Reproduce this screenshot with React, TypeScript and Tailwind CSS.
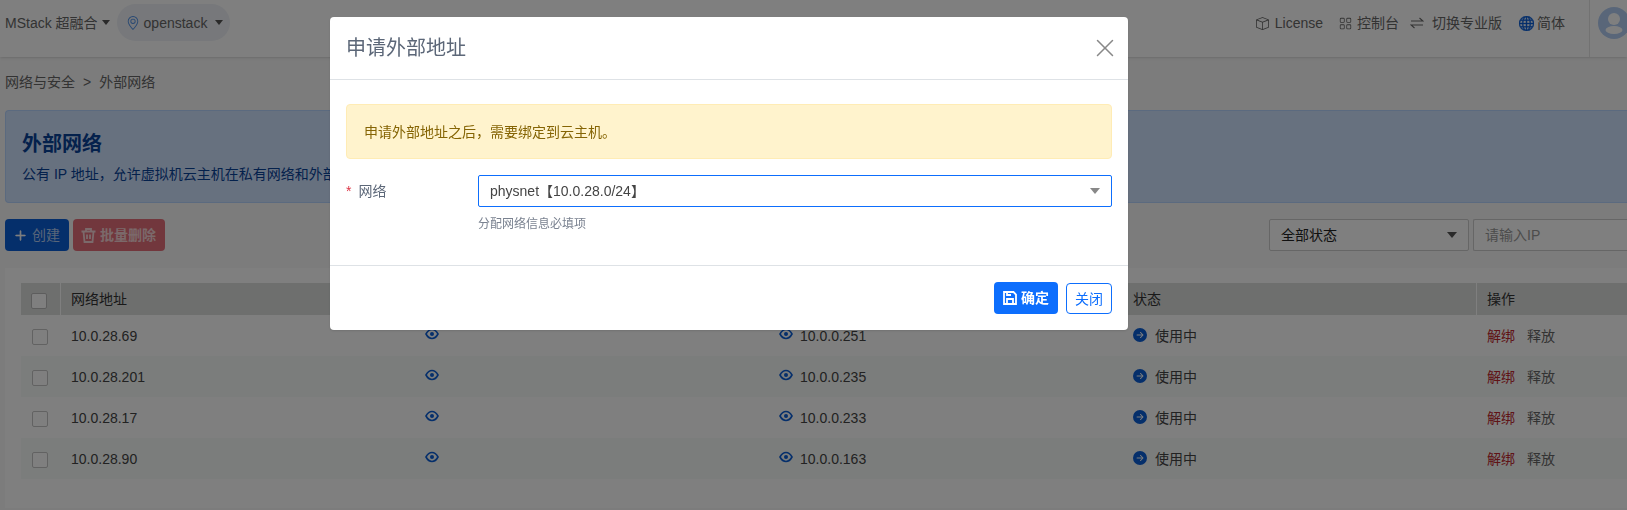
import { BsBox, BsGeoAlt, BsPlusLg, BsArrowRightCircleFill, BsGlobe, BsGrid } from "react-icons/bs";
import { X } from "lucide-react";

const rows = [
  { ip: "10.0.28.69", inner: "10.0.0.251" },
  { ip: "10.0.28.201", inner: "10.0.0.235" },
  { ip: "10.0.28.17", inner: "10.0.0.233" },
  { ip: "10.0.28.90", inner: "10.0.0.163" },
];

function Caret({ className = "ml-1" }: { className?: string }) {
  return <span className={`inline-block border-x-[4px] border-t-[5px] border-x-transparent border-t-[#555] ${className}`} />;
}

function Eye({ className = "" }: { className?: string }) {
  return (
    <svg width="14" height="12" viewBox="0 0 14 12" className={`text-[#0b5ed7] ${className}`} fill="none">
      <path d="M1 6C2.6 3 4.6 1.5 7 1.5S11.4 3 13 6C11.4 9 9.4 10.5 7 10.5S2.6 9 1 6Z" stroke="currentColor" strokeWidth="1.6" />
      <circle cx="7" cy="6" r="2" fill="currentColor" />
    </svg>
  );
}

function Harpoons() {
  return (
    <svg width="14" height="14" viewBox="0 0 14 14" fill="none" stroke="currentColor" strokeWidth="1.1" className="ml-[11px] mr-[8px]">
      <path d="M1 5H13L9.5 2" />
      <path d="M13 9H1L4.5 12" />
    </svg>
  );
}

function Avatar() {
  return (
    <svg width="32" height="32" viewBox="0 0 32 32" className="shrink-0">
      <circle cx="16" cy="16" r="16" fill="#b3cdf2" />
      <circle cx="16" cy="12" r="6" fill="#ffffff" />
      <ellipse cx="16" cy="23" rx="8.5" ry="4" fill="#ffffff" />
    </svg>
  );
}

function TrashIcon() {
  return (
    <svg width="15" height="15" viewBox="0 0 15 15" fill="none" stroke="currentColor" strokeWidth="1.8" className="mr-[4px]">
      <path d="M0.5 3.5H14.5M5 3.5V1H10V3.5M2.5 3.5L3.5 14H11.5L12.5 3.5M6 6.5V11M9 6.5V11" />
    </svg>
  );
}

function SaveIcon() {
  return (
    <svg width="14" height="14" viewBox="0 0 14 14" fill="none" stroke="currentColor" strokeWidth="1.8" className="mr-[4px]">
      <path d="M1 1H10.5L13 3.5V13H1Z" />
      <path d="M4 13V8H10V13M4 1V4H8" />
    </svg>
  );
}

export default function App() {
  return (
    <div className="relative h-[510px] w-[1627px] overflow-hidden bg-[#f8f8f8] text-sm text-[#444] [font-family:'Liberation_Sans','Noto_Sans_CJK_SC',sans-serif]">
      <header className="flex h-[57px] items-center bg-white pl-[5px] text-[#666] shadow-sm">
        <div className="flex items-center pb-3">
          <span>MStack 超融合</span>
          <Caret />
        </div>
        <div className="mb-3 ml-[7px] flex h-[37px] w-[113px] items-center rounded-full bg-[#eef1f6] pl-[9px]">
          <BsGeoAlt className="text-[#4d8fe6]" size={14} />
          <span className="ml-[4px]">openstack</span>
          <Caret className="ml-[8px]" />
        </div>
        <div className="ml-auto flex h-full items-start">
          <div className="flex h-[46px] items-center">
            <BsBox size={13} className="mr-[6px]" />
            <span>License</span>
            <BsGrid size={13} className="ml-[16px] mr-[5px]" />
            <span>控制台</span>
            <Harpoons />
            <span>切换专业版</span>
            <BsGlobe size={15} stroke="currentColor" strokeWidth={0.5} className="ml-[17px] mr-[3px] text-[#0b5ed7]" />
            <span>简体</span>
          </div>
          <div className="ml-[24px] flex h-full w-[38px] items-start border-l border-[#e4e4e4] pl-[8px] pt-[7px]">
            <Avatar />
          </div>
        </div>
      </header>

      <main className="pl-[5px]">
        <div className="flex h-[53px] items-center pb-[3px] text-[#666]">
          <span>网络与安全</span>
          <span className="mx-[8px]">&gt;</span>
          <span>外部网络</span>
        </div>
        <section className="h-[93px] rounded-l border border-r-0 border-[#b6d4fe] bg-[#cfe2ff] px-[16px] pt-[19px] text-[#084298]">
          <h1 className="text-xl font-bold leading-[28px]">外部网络</h1>
          <p className="mt-[6px] leading-[21px]">公有 IP 地址，允许虚拟机云主机在私有网络和外部网络之间通信。</p>
        </section>
        <div className="mt-[16px] flex h-[32px] items-center">
          <button className="flex h-[32px] items-center rounded bg-[#0b5ed7] px-[9px] text-white/70">
            <BsPlusLg size={13} stroke="currentColor" strokeWidth={1} className="mr-[5px] text-white" />
            创建
          </button>
          <button className="ml-[4px] flex h-[32px] items-center rounded bg-[#dc3545]/70 pl-[8px] pr-[9px] font-bold text-white/70">
            <TrashIcon />
            批量删除
          </button>
          <div className="ml-auto flex h-[32px] w-[200px] items-center justify-between rounded-[2px] border border-[#ccc] bg-white px-[11px] text-[#222]">
            全部状态
            <span className="border-x-[5px] border-t-[6px] border-x-transparent border-t-[#555]" />
          </div>
          <div className="ml-[4px] flex h-[32px] w-[154px] items-center rounded-l-[2px] border border-r-0 border-[#ccc] bg-white pl-[11px] text-[#999]">
            请输入IP
          </div>
        </div>
        <section className="mt-[17px] h-[240px] bg-white pl-[16px] pt-[15px]">
          <div className="grid h-[32px] grid-cols-[40px_353px_354px_354px_355px_1fr] items-center bg-[#dcdfdd] text-[#333]">
            <div className="flex h-full items-center justify-center border-r border-white pr-[3px]">
              <span className="mt-[3px] h-[16px] w-[16px] rounded-[2px] border border-[#bbb] bg-white" />
            </div>
            <div className="pl-[10px]">网络地址</div>
            <div />
            <div />
            <div className="h-full border-r border-white pl-[11px] leading-[32px]">状态</div>
            <div className="pl-[10px]">操作</div>
          </div>
          {rows.map((row, i) => (
            <div
              key={row.ip}
              className={`grid h-[41px] grid-cols-[40px_353px_354px_354px_355px_1fr] items-center ${i % 2 === 1 ? "bg-[#f7faf8]" : ""}`}
            >
              <div className="flex justify-center pr-[3px]">
                <span className="mt-[2px] h-[16px] w-[16px] rounded-[2px] border border-[#c4c4c4] bg-white" />
              </div>
              <div className="pl-[10px]">{row.ip}</div>
              <div className="pl-[11px]">
                <Eye className="mb-[3px]" />
              </div>
              <div className="flex items-center pl-[11px]">
                <Eye className="mb-[3px] mr-[7px]" />
                {row.inner}
              </div>
              <div className="flex items-center pl-[11px]">
                <BsArrowRightCircleFill size={14} className="mb-[2px] mr-[8px] text-[#0b5ed7]" />
                使用中
              </div>
              <div className="pl-[10px]">
                <span className="text-[#c0272d]">解绑</span>
                <span className="ml-[12px] text-[#666]">释放</span>
              </div>
            </div>
          ))}
        </section>
      </main>

      <div className="fixed inset-0 bg-black/50" />

      <div className="fixed left-[330px] top-[17px] h-[313px] w-[798px] rounded bg-white shadow-sm">
        <div className="flex h-[63px] items-center justify-between border-b border-[#dee2e6] pl-[16px] pr-[8px] text-xl text-[#5c6778]">
          <h2>申请外部地址</h2>
          <X size={30} strokeWidth={1.2} className="text-[#888]" />
        </div>
        <div className="px-[16px] pt-[24px]">
          <div className="flex h-[55px] items-center rounded border border-[#ffecb5] bg-[#fff3cd] pl-[17px] text-[#856404]">
            申请外部地址之后，需要绑定到云主机。
          </div>
          <div className="mt-[16px] flex">
            <div className="w-[132px] pt-[6px] text-[#5c6778]">
              <span className="mr-[7px] text-[#dc3545]">*</span>网络
            </div>
            <div className="flex-1">
              <div className="flex h-[32px] items-center justify-between rounded-[2px] border border-[#0d6efd] pl-[11px] pr-[11px] text-[#444]">
                physnet【10.0.28.0/24】
                <span className="border-x-[5px] border-t-[6px] border-x-transparent border-t-[#888]" />
              </div>
              <p className="mt-[9px] text-xs text-[#7a8290]">分配网络信息必填项</p>
            </div>
          </div>
        </div>
        <div className="absolute inset-x-0 bottom-0 flex h-[65px] items-start justify-end border-t border-[#dee2e6] pr-[16px] pt-[16px]">
          <button className="flex h-[32px] w-[64px] items-center justify-center rounded bg-[#0d6efd] font-bold text-white">
            <SaveIcon />
            确定
          </button>
          <button className="ml-[8px] mt-px h-[31px] w-[46px] rounded border border-[#0d6efd] text-[#0d6efd]">关闭</button>
        </div>
      </div>
    </div>
  );
}
